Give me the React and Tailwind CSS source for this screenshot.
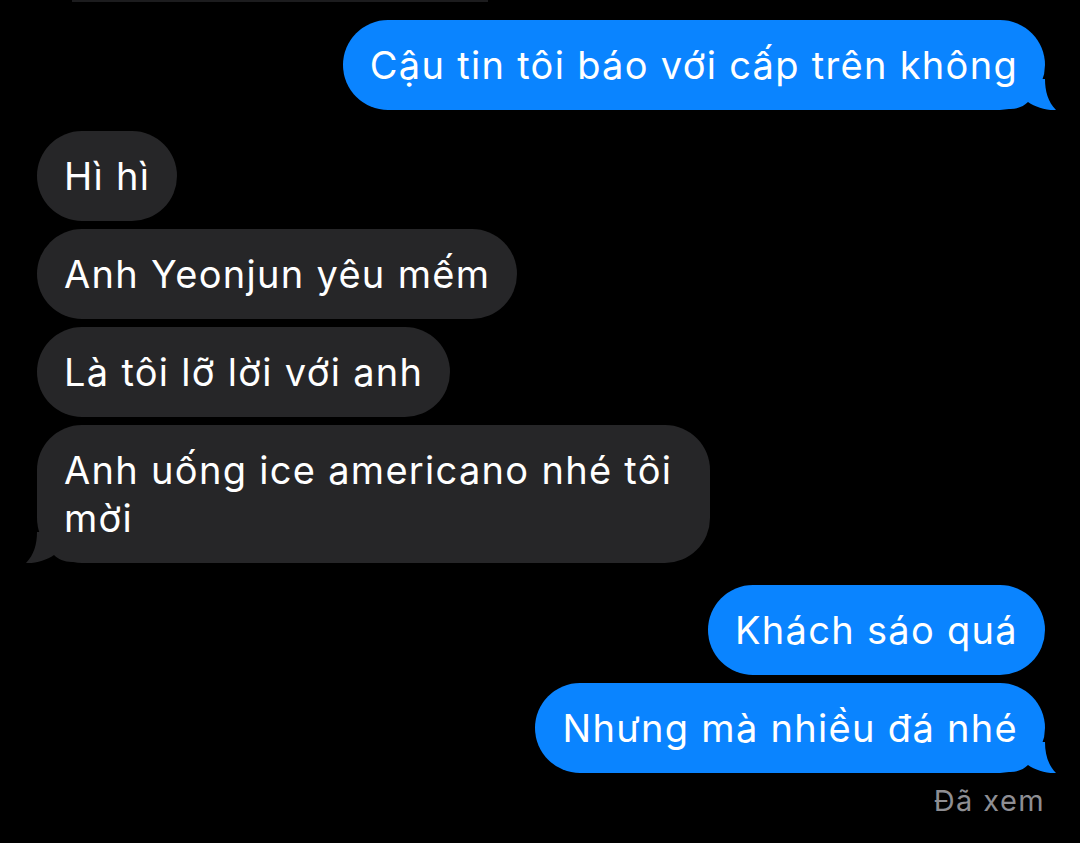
import React from 'react';

const Tail = ({ color, side }) => (
  <svg
    width="50"
    height="32"
    viewBox="0 0 50 32"
    className={
      side === 'right'
        ? 'absolute right-[-11px] bottom-[-1px]'
        : 'absolute left-[-11px] bottom-[-1px] -scale-x-100'
    }
  >
    <path
      d="M0 0 H39 C39 12 42 23 50 31 C40 31.5 29 28 22 23 C18 27 12 30 4 30 H0 Z"
      fill={color}
    />
  </svg>
);

const Sent = ({ text, tail }) => (
  <div className="relative self-end mr-[35px] rounded-[45px] bg-[#0a84ff] px-[27px] py-[21px] text-[38px] leading-[48px] tracking-[1.3px] text-white">
    <span className="relative z-10">{text}</span>
    {tail && <Tail color="#0a84ff" side="right" />}
  </div>
);

const Received = ({ text, tail }) => (
  <div className="relative self-start ml-[37px] max-w-[673px] rounded-[45px] bg-[#262628] px-[27px] py-[21px] text-[38px] leading-[48px] tracking-[1.3px] text-white">
    <span className="relative z-10">{text}</span>
    {tail && <Tail color="#262628" side="left" />}
  </div>
);

export default function App() {
  return (
    <div className="min-h-screen w-full bg-black font-[Inter,sans-serif] flex flex-col overflow-hidden">
      {/* leftover edge of the element above */}
      <div className="ml-[72px] h-[2px] w-[416px] bg-[#1c1c1e]" />

      <div className="mt-[18px] flex flex-col">
        <Sent text="Cậu tin tôi báo với cấp trên không" tail />
      </div>

      <div className="mt-[21px] flex flex-col gap-[8px]">
        <Received text="Hì hì" />
        <Received text="Anh Yeonjun yêu mếm" />
        <Received text="Là tôi lỡ lời với anh" />
        <Received text="Anh uống ice americano nhé tôi mời" tail />
      </div>

      <div className="mt-[22px] flex flex-col gap-[8px]">
        <Sent text="Khách sáo quá" />
        <Sent text="Nhưng mà nhiều đá nhé" tail />
      </div>

      <div className="self-end mr-[35px] mt-[10px] text-[29px] leading-[36px] tracking-[1.4px] text-[#8e8e93]">
        Đã xem
      </div>
    </div>
  );
}
